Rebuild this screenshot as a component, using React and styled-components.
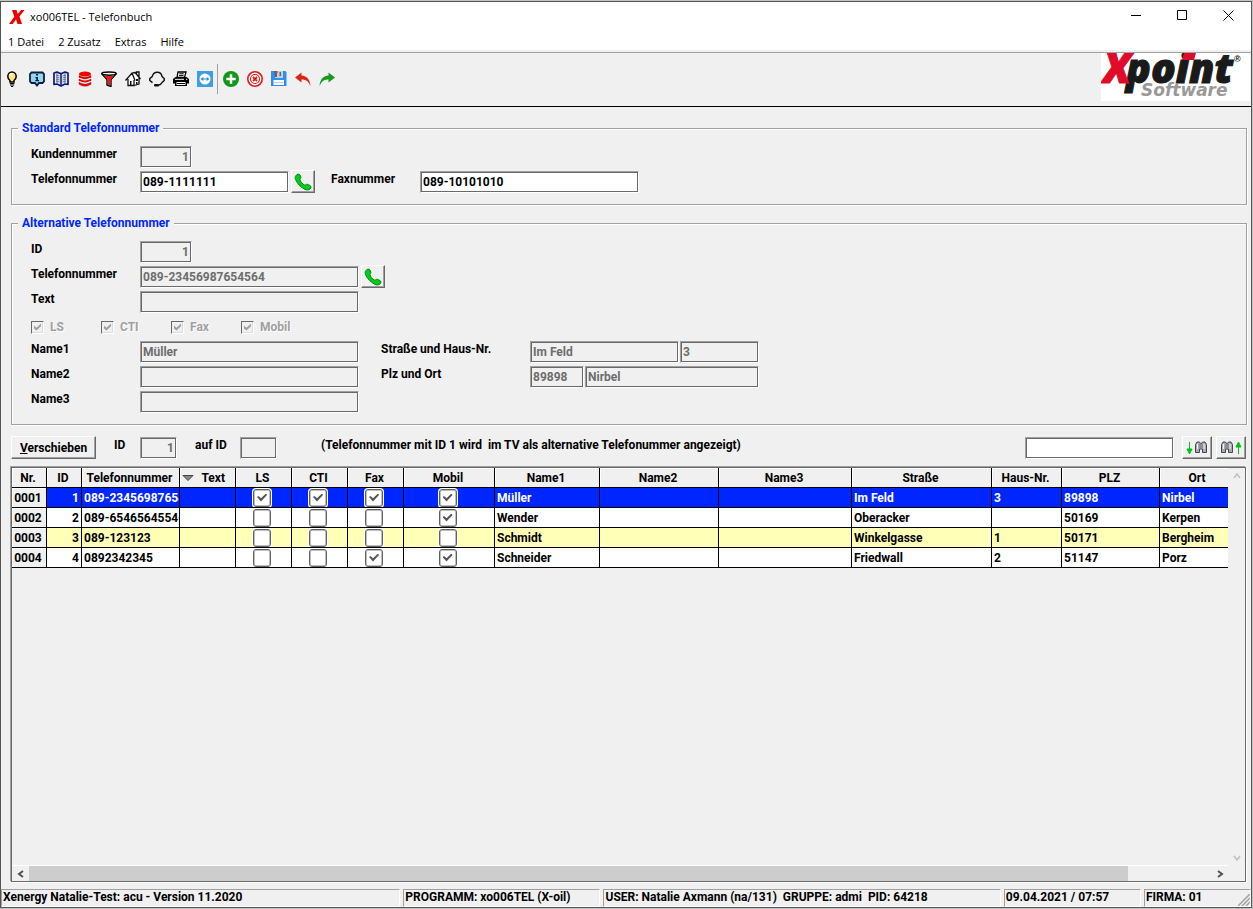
import React from 'react';
import styled, { createGlobalStyle, css } from 'styled-components';

const face = '#f0f0f0';
const shade = '#a0a0a0';
const dark = '#696969';

const GlobalStyle = createGlobalStyle`
  *, *::before, *::after { box-sizing: border-box; }
  body { margin: 0; background: #c4c4c4; }
  button, input { font: inherit; color: inherit; margin: 0; }
  button { padding: 0; }
`;

const Desktop = styled.div`
  min-height: 100vh;
  padding: 1px 1px 1px 0;
  display: flex;
  flex-direction: column;
`;

const Window = styled.div`
  flex: 1;
  display: flex;
  flex-direction: column;
  border: 1px solid #555;
  background: ${face};
  color: #000;
  font: bold 12px/18px Roboto, 'Liberation Sans', sans-serif;
`;

const TitleBar = styled.header`
  height: 29px;
  background: #fff;
  display: flex;
  align-items: center;
  padding-left: 8px;
  gap: 5px;
  font: 11px/16px 'Open Sans', 'Noto Sans', sans-serif;
`;

const Title = styled.h1`
  flex: 1;
  margin: 0;
  font: inherit;
`;

const CaptionButton = styled.button`
  width: 46px;
  height: 28px;
  border: 0;
  background: transparent;
  display: grid;
  place-items: center;
`;

const MenuBar = styled.nav`
  height: 19px;
  background: #fff;
  display: flex;
  align-items: center;
  gap: 14px;
  padding: 2px 0 0 7px;
`;

const MenuItem = styled.button`
  border: 0;
  background: transparent;
  font: 11px/16px 'Open Sans', 'Noto Sans', sans-serif;
`;

const ToolBar = styled.div`
  margin-top: 2px;
  height: 55px;
  border-top: 1px solid ${shade};
  border-bottom: 1px solid #000;
  display: flex;
  align-items: center;
  justify-content: space-between;
`;

const ToolGroup = styled.div`
  display: flex;
  align-items: center;
  padding-bottom: 2px;
`;

const ToolButton = styled.button`
  width: 24px;
  height: 24px;
  border: 0;
  background: transparent;
  display: grid;
  place-items: center;
`;

const Separator = styled.span`
  width: 2px;
  height: 30px;
  border-left: 1px solid ${shade};
`;

const Logo = styled.div`
  background: #fff;
  width: 149px;
  height: 48px;
  margin-right: 1px;
  align-self: flex-start;
  svg { display: block; }
`;

const Content = styled.main`
  flex: 1;
  display: flex;
  flex-direction: column;
  padding: 14px 4px 7px 10px;
`;

const Group = styled.fieldset`
  margin: 0 0 11px;
  min-width: 0;
  border: 1px solid ${shade};
  box-shadow: inset 1px 1px 0 #fff, 1px 1px 0 #fff;
  padding: 10px 6px 9px;
`;

const Legend = styled.legend`
  padding: 0 4px;
  line-height: 14px;
  color: #0026ff;
  background: ${face};
`;

const Row = styled.div`
  height: 25px;
  padding-left: 13px;
  display: flex;
  align-items: flex-start;
`;

const Label = styled.label`
  flex: none;
  width: ${p => p.$w || 109}px;
  margin-left: ${p => p.$gap || 0}px;
`;

const Field = styled.input`
  flex: none;
  width: ${p => p.$w || 219}px;
  height: 22px;
  margin: 1px 1px 0 0;
  padding: 0 2px;
  border: 1px solid;
  border-color: ${shade} #fff #fff ${shade};
  border-radius: 0;
  box-shadow: inset 0 0 0 1px ${dark};
  background: #fff;
  text-align: ${p => (p.$right ? 'right' : 'left')};
  outline: 0;
  &:disabled { background: ${face}; color: #6d6d6d; }
`;

const raised = css`
  border: 1px solid;
  border-color: #fff ${dark} ${dark} #fff;
  box-shadow: inset -1px -1px 0 ${shade};
  background: ${face};
`;

const PushButton = styled.button`
  ${raised}
  flex: none;
  width: ${p => p.$w}px;
  height: 23px;
  display: grid;
  place-items: center;
  ${Field} + & { margin-left: 1px; }
`;

const CheckLabel = styled.label`
  width: 70px;
  height: 24px;
  display: flex;
  align-items: center;
  gap: 6px;
  color: ${shade};
  text-shadow: 1px 1px 0 #fff;
`;

const SunkenCheck = styled.input.attrs({ type: 'checkbox' })`
  appearance: none;
  width: 13px;
  height: 13px;
  border: 1px solid;
  border-color: ${dark} #fff #fff ${dark};
  box-shadow: inset -1px -1px 0 #dcdcdc;
  display: grid;
  place-items: center;
  &:checked::before {
    content: '';
    width: 7px;
    height: 7px;
    background: ${shade};
    clip-path: polygon(0 30%, 35% 60%, 100% 0, 100% 40%, 35% 100%, 0 70%);
  }
`;

const ActionBar = styled.div`
  display: flex;
  align-items: flex-start;
  height: 23px;
  margin-bottom: 8px;
`;

const Note = styled.p`
  flex: 1;
  margin: 0 0 0 43px;
  white-space: pre;
`;

const SearchTools = styled.div`
  display: flex;
  align-items: flex-start;
  gap: 7px;
  padding-right: 1px;
`;

const FindButtons = styled.div`
  display: flex;
  gap: 4px;
`;

const GridPanel = styled.section`
  flex: 1;
  margin-right: 1px;
  display: grid;
  grid-template: minmax(0, 1fr) 16px / minmax(0, 1fr) 17px;
  border: 1px solid ${dark};
  box-shadow: -1px -1px 0 ${shade}, 1px 1px 0 #fff;
`;

const Table = styled.table`
  width: 100%;
  align-self: start;
  table-layout: fixed;
  border-collapse: separate;
  border-spacing: 0;
`;

const HeadCell = styled.th`
  height: 20px;
  padding: 0 2px 0 0;
  line-height: 18px;
  text-align: center;
  background: ${face};
  border-right: 1px solid #000;
  border-bottom: 1px solid #000;
  box-shadow: inset 1px 1px 0 #fff;
  white-space: nowrap;
  &:last-child { border-right: 0; padding-left: 8px; }
`;

const SortHead = styled.span`
  display: flex;
  align-items: center;
  justify-content: space-between;
  padding: 0 8px 0 2px;
`;

const RowHead = styled(HeadCell).attrs({ as: 'th', scope: 'row' })``;

const BodyRow = styled.tr`
  background: ${p => (p.$tone === 'active' ? '#0026ff' : p.$tone === 'alt' ? '#ffffb8' : '#fff')};
  color: ${p => (p.$tone === 'active' ? '#fff' : '#000')};
  ${RowHead} { color: #000; }
`;

const Cell = styled.td`
  height: 20px;
  padding: 0 2px;
  line-height: 18px;
  text-align: ${p => p.$align || 'left'};
  border-right: 1px solid #000;
  border-bottom: 1px solid #000;
  overflow: hidden;
  white-space: nowrap;
  &:last-child { border-right: 0; }
`;

const CheckCell = styled(Cell)`
  padding: 0 3px 0 0;
`;

const GridCheck = styled.input.attrs({ type: 'checkbox' })`
  appearance: none;
  display: block;
  width: 18px;
  height: 18px;
  margin: 0 auto;
  border: 1px solid #606060;
  border-radius: 3px;
  background: #fff;
  box-shadow: 0 0 0 1px #fff, inset 0 0 0 1px #c0c0c0;
  &:checked::before {
    content: '';
    display: block;
    width: 10px;
    height: 8px;
    margin: 4px 3px;
    background: #555;
    clip-path: polygon(0 45%, 15% 30%, 40% 60%, 90% 0, 100% 18%, 40% 100%);
  }
`;

const ScrollTrack = styled.div`
  display: flex;
  flex-direction: ${p => (p.$vertical ? 'column' : 'row')};
  justify-content: space-between;
  ${p => (p.$vertical ? '' : 'border-top: 1px solid #fff;')}
`;

const ScrollButton = styled.button`
  width: 17px;
  height: 15px;
  border: 0;
  background: transparent;
  display: grid;
  place-items: center;
`;

const ThumbLane = styled.div`
  flex: 1;
`;

const Thumb = styled.div`
  width: 93%;
  height: 15px;
  background: #cdcdcd;
`;

const StatusBar = styled.footer`
  display: grid;
  grid-template-columns: 399fr 197fr 397fr 137fr 107fr;
  gap: 3px;
  height: 18px;
`;

const StatusPanel = styled.div`
  border: 1px solid;
  border-color: ${shade} #fff #fff ${shade};
  line-height: 17px;
  padding-left: 1px;
  white-space: pre;
  display: flex;
  justify-content: space-between;
  align-items: flex-end;
  overflow: hidden;
`;

const Svg = ({ size = 16, w, h, children, ...rest }) => (
  <svg width={w || size} height={h || size} viewBox={`0 0 ${w || size} ${h || size}`} fill="none" aria-hidden="true" {...rest}>
    {children}
  </svg>
);

const tools = [
  ['Tipp', <Svg key="i">
    <path d="M5 11V9.500C3.800 8.500 2.800 7.300 2.800 5.400A4.200 4.400 0 0 1 11.200 5.400C11.200 7.300 10.200 8.500 9 9.500V11z" fill="#ffe680" stroke="#000" strokeWidth="1.500" />
    <path d="M5 4.500q.5-2 2.500-2" stroke="#fff" strokeWidth="1.300" />
    <path d="M4.800 12.500h4.600M5 14h4.200M6 15.500h2.200" stroke="#000" strokeWidth="1" />
  </Svg>],
  ['Info', <Svg key="i">
    <path d="M2.500 1.500h11L15 3v7.500L13.500 12H10l-2 2.500L6 12H2.500L1 10.500V3z" fill="#8fd8ee" stroke="#101c40" strokeWidth="1.800" />
    <path d="M7 3h2v1.600H7zM6.500 6H9v3h1v1.200H6.300V9h1V7.200h-.8z" fill="#101c40" />
  </Svg>],
  ['Buch', <Svg key="i">
    <path d="M1 2l3-1 4 1.800L12 1l3 1v11.500l-3-.5-4 2-4-2-3 .500z" fill="#e8ecf8" stroke="#0a1a80" strokeWidth="1.700" strokeLinejoin="round" />
    <path d="M8 3v11" stroke="#0a1a80" strokeWidth="1.500" />
    <path d="M3 4l3.500 1M3 6l3.500 1M3 8l3.500 1M3 10l3.500 1M13 4L9.500 5M13 6L9.500 7M13 8L9.500 9M13 10l-3.500 1M4 2v10M12 2v10" stroke="#6b7280" />
  </Svg>],
  ['Datenbank', <Svg key="i">
    <ellipse cx="8" cy="3" rx="6" ry="2.500" fill="#f00000" />
    <path d="M2 4.500q6 3.500 12 0v2q-6 3.500-12 0zM2 8q6 3.500 12 0v1.800q-6 3.500-12 0zM2 11.300q6 3.500 12 0v2q-6 4-12 0z" fill="#f00000" stroke="#a00000" strokeWidth=".4" />
    <path d="M2.500 7.400q5.500 3 11 0M2.500 10.700q5.500 3 11 0" stroke="#fff" strokeWidth=".7" />
  </Svg>],
  ['Filter', <Svg key="i">
    <path d="M1 3l5 5.500v5.500l4 1.500V8.500L15 3z" fill="#fff" stroke="#000" strokeWidth="1.400" strokeLinejoin="round" />
    <path d="M3 5h10L9.500 8.500v6.200L6.800 13.500V8.500z" fill="#f01818" />
    <ellipse cx="8" cy="2.600" rx="7.200" ry="1.600" fill="#fff" stroke="#000" strokeWidth="1.500" />
  </Svg>],
  ['Start', <Svg key="i">
    <path d="M3 8v6.500h7L14 13V7l-3-5H8z" fill="#fff" />
    <path d="M.5 9.500L7 2l3-.5 5.500 6.500M3 8v6.500h6V9M9 14.500l5-1.500V7M10 9.500L7 2M11.500 3V1H14v5" stroke="#111" strokeWidth="1.300" />
    <path d="M5 14.500V10h1.500v4.500zM11 8h2v2h-2zM11 11h1.500v2.500H11z" fill="#111" />
  </Svg>],
  ['Headset', <Svg key="i">
    <path d="M3.300 5.500C4 2.300 6 1.200 8.200 1.200S12.600 2.300 13 5.500M13 11.500q-1 2.300-3.500 2.700" stroke="#111" strokeWidth="1.400" />
    <path d="M3.500 5.300L.8 7.500v2l2.700 2.200M12.700 5.300L15.200 7.500v2l-2.500 2.200" stroke="#111" strokeWidth="1.500" />
    <rect x="5" y="13" width="5" height="2.500" rx="1" fill="#111" />
  </Svg>],
  ['Drucken', <Svg key="i">
    <path d="M4 6.500L5 1h8l-1.500 5.500z" fill="#fff" stroke="#000" strokeWidth="1.300" />
    <path d="M6.300 2.800h4.500M6 4.600h4.500" stroke="#000" />
    <path d="M2.500 6h11L16 8v4.500h-2V15H2v-2.500H0V8z" fill="#000" />
    <path d="M2 8.300h9M13 8.300h1.300" stroke="#fff" />
    <path d="M3.500 11h9v3h-9z" fill="#fff" /><path d="M4 12.500h8" stroke="#000" />
  </Svg>],
  ['Fernwartung', <Svg key="i">
    <rect width="16" height="16" fill="#3b9fe3" />
    <circle cx="8" cy="8" r="5.500" fill="#fff" />
    <path d="M3.500 8L6.300 6v1.400h3.400V6l2.800 2-2.800 2V8.600H6.300V10z" fill="#2b8fd3" />
  </Svg>],
];

const editTools = [
  ['Neu', <Svg key="i">
    <circle cx="8" cy="8" r="8" fill="#109618" /><path d="M8 3.300v9.400M3.300 8h9.400" stroke="#fff" strokeWidth="2.500" />
  </Svg>],
  ['Löschen', <Svg key="i">
    <circle cx="8" cy="8" r="7.200" fill="#fff" stroke="#e01818" strokeWidth="1.600" />
    <circle cx="8" cy="8" r="4.500" stroke="#e01818" strokeWidth="1.100" />
    <path d="M6 6l4 4M10 6l-4 4" stroke="#e01818" strokeWidth="1.800" />
  </Svg>],
  ['Speichern', <Svg key="i">
    <path d="M0 0h14.500L15.500 1.500V15H0z" fill="#2f8ff0" />
    <path d="M4 0h8v7H4z" fill="#c9cdd4" /><path d="M3 0h3v6H4zM8.500 1H10v4H8.500z" fill="#5b6270" /><path d="M5 0h1.500v2H5z" fill="#d04030" />
    <path d="M2.500 9h10.500v5H2.500z" fill="#fff" /><path d="M3 11.500h9.500" stroke="#b8cde8" />
  </Svg>],
  ['Rückgängig', <Svg key="i">
    <path d="M6.500 1.500L0 6.500l6.500 5V8.500c4-.5 7 1.500 9 6.500C15 8.500 12 5 6.500 4.500z" fill="#de2418" />
  </Svg>],
  ['Wiederholen', <Svg key="i">
    <path d="M9.500 1.500L16 6.500l-6.500 5V8.500c-4-.5-7 1.500-9 6.500C1 8.500 4 5 9.500 4.500z" fill="#18981c" />
  </Svg>],
];

const PhoneIcon = () => (
  <Svg size={18}>
    <path d="M2 2.500C3 1 5 .500 6 2l1 2.300c.2 1-1.200 1.500-1 2.500.6 2 2.500 4.200 4.400 5.200 1 .4 1.700-1 2.700-.8L16 12.500c1.300.7 1.300 2.200 0 3.500-1.200 1.200-3.500 1.200-5 .4C6.500 14.200 3.200 10.500 1.500 6.500 1 5 1 3.600 2 2.500z" fill="#00cc1a" stroke="#078a12" />
  </Svg>
);

const FindIcon = ({ up }) => (
  <Svg w={22} h={16}>
    <path d={up ? 'M18.500 14V4M16 7l2.500-5 2.500 5z' : 'M3.500 2v10M1 9l2.500 5L6 9z'} stroke="#00c21a" fill="#00c21a" />
    <g transform={up ? 'translate(1 0)' : 'translate(9 0)'}>
      <path d="M.5 4.500L2 2h2.500l1 1.500h1L7.500 2H10l1.500 2.500v8h-4V9h-3v3.500h-4z" fill="#a9abb2" stroke="#44464c" />
      <path d="M5 4v4M7 4v4" stroke="#6d7076" />
      <path d="M2.500 4v5M9 4v5" stroke="#f4f4f8" />
    </g>
  </Svg>
);

const XpointLogo = () => (
  <svg width="149" height="48" viewBox="0 0 149 48" role="img" aria-label="Xpoint Software">
    <text x="25" y="30" fontFamily="Open Sans" fontWeight="800" fontStyle="italic" fontSize="41" fill="#1a1a1a" stroke="#1a1a1a">point</text>
    <path d="M83 0h12l-2 7H81z" fill="#e00a2a" />
    <text x="2" y="30" fontFamily="Open Sans" fontWeight="800" fontStyle="italic" fontSize="42" fill="#e00a2a" stroke="#e00a2a">X</text>
    <text x="40" y="43" fontFamily="DejaVu Sans" fontWeight="bold" fontStyle="italic" fontSize="17" fill="#999">Software</text>
    <text x="133" y="9" fontFamily="Liberation Sans" fontSize="9" fill="#222">®</text>
  </svg>
);

const chevrons = {
  left: 'M6 1L2 4l4 3',
  right: 'M2 1l4 3-4 3',
  up: 'M1 6l3-4 3 4',
  down: 'M1 2l3 4 3-4',
};

const Arrow = ({ dir, faint }) => (
  <ScrollButton aria-label={dir}>
    <Svg size={8}><path d={chevrons[dir]} stroke={faint ? '#bfbfbf' : '#505050'} strokeWidth={faint ? 1.5 : 2} /></Svg>
  </ScrollButton>
);

const columns = [
  ['Nr.', 35], ['ID', 35], ['Telefonnummer', 98], ['Text', 56], ['LS', 56], ['CTI', 56], ['Fax', 56],
  ['Mobil', 91], ['Name1', 105], ['Name2', 119], ['Name3', 133], ['Straße', 140], ['Haus-Nr.', 70], ['PLZ', 98], ['Ort', null],
];

const entries = [
  { nr: '0001', id: 1, tel: '089-23456987654564', flags: [1, 1, 1, 1], name: 'Müller', street: 'Im Feld', no: '3', zip: '89898', town: 'Nirbel', tone: 'active' },
  { nr: '0002', id: 2, tel: '089-65465645546', flags: [0, 0, 0, 1], name: 'Wender', street: 'Oberacker', no: '', zip: '50169', town: 'Kerpen' },
  { nr: '0003', id: 3, tel: '089-123123', flags: [0, 0, 0, 0], name: 'Schmidt', street: 'Winkelgasse', no: '1', zip: '50171', town: 'Bergheim', tone: 'alt' },
  { nr: '0004', id: 4, tel: '0892342345', flags: [0, 0, 1, 1], name: 'Schneider', street: 'Friedwall', no: '2', zip: '51147', town: 'Porz' },
];

const flagNames = ['LS', 'CTI', 'Fax', 'Mobil'];

const PhoneBookTable = () => (
  <Table>
    <colgroup>
      {columns.map(([name, width]) => <col key={name} width={width || undefined} />)}
    </colgroup>
    <thead>
      <tr>
        {columns.map(([name]) => (
          <HeadCell key={name} scope="col">
            {name === 'Text' ? (
              <SortHead>
                <Svg w={12} h={8}><path d="M1 1.500h10L6 6.500z" fill="#888" stroke="#444" /></Svg>
                {name}
              </SortHead>
            ) : name}
          </HeadCell>
        ))}
      </tr>
    </thead>
    <tbody>
      {entries.map(e => (
        <BodyRow key={e.nr} $tone={e.tone}>
          <RowHead>{e.nr}</RowHead>
          <Cell $align="right">{e.id}</Cell>
          <Cell>{e.tel}</Cell>
          <Cell />
          {e.flags.map((on, i) => (
            <CheckCell key={flagNames[i]}>
              <GridCheck defaultChecked={!!on} aria-label={`${flagNames[i]} ${e.nr}`} />
            </CheckCell>
          ))}
          <Cell>{e.name}</Cell>
          <Cell />
          <Cell />
          <Cell>{e.street}</Cell>
          <Cell>{e.no}</Cell>
          <Cell>{e.zip}</Cell>
          <Cell>{e.town}</Cell>
        </BodyRow>
      ))}
    </tbody>
  </Table>
);

export default function App() {
  return (
    <Desktop>
      <GlobalStyle />
      <Window>
        <TitleBar>
          <Svg>
            <path d="M3 1h4.500l1.300 4L12 1h3.500l-5 6.500L13 15H8.500L7 10.500 3.700 15H0l5.300-7.300z" fill="#f00000" />
          </Svg>
          <Title>xo006TEL - Telefonbuch</Title>
          <ToolGroup>
            <CaptionButton aria-label="Minimieren"><Svg size={11}><path d="M0 5.500h10" stroke="#000" /></Svg></CaptionButton>
            <CaptionButton aria-label="Maximieren"><Svg size={11}><path d="M.5 .5h9v9h-9z" stroke="#000" /></Svg></CaptionButton>
            <CaptionButton aria-label="Schließen"><Svg size={11}><path d="M.5 .5l10 10M10.500 .5l-10 10" stroke="#000" /></Svg></CaptionButton>
          </ToolGroup>
        </TitleBar>
        <MenuBar>
          {['1 Datei', '2 Zusatz', 'Extras', 'Hilfe'].map(m => <MenuItem key={m}>{m}</MenuItem>)}
        </MenuBar>
        <ToolBar>
          <ToolGroup>
            {tools.map(([name, icon]) => <ToolButton key={name} aria-label={name}>{icon}</ToolButton>)}
            <Separator />
            {editTools.map(([name, icon]) => <ToolButton key={name} aria-label={name}>{icon}</ToolButton>)}
          </ToolGroup>
          <Logo><XpointLogo /></Logo>
        </ToolBar>

        <Content>
          <Group>
            <Legend>Standard Telefonnummer</Legend>
            <Row>
              <Label htmlFor="kdnr">Kundennummer</Label>
              <Field id="kdnr" $w={52} $right disabled defaultValue="1" />
            </Row>
            <Row>
              <Label htmlFor="tel">Telefonnummer</Label>
              <Field id="tel" $w={149} defaultValue="089-1111111" />
              <PushButton $w={24} aria-label="Anrufen"><PhoneIcon /></PushButton>
              <Label htmlFor="fax" $w={89} $gap={16}>Faxnummer</Label>
              <Field id="fax" defaultValue="089-10101010" />
            </Row>
          </Group>

          <Group>
            <Legend>Alternative Telefonnummer</Legend>
            <Row>
              <Label htmlFor="altid">ID</Label>
              <Field id="altid" $w={52} $right disabled defaultValue="1" />
            </Row>
            <Row>
              <Label htmlFor="alttel">Telefonnummer</Label>
              <Field id="alttel" disabled defaultValue="089-23456987654564" />
              <PushButton $w={24} aria-label="Anrufen"><PhoneIcon /></PushButton>
            </Row>
            <Row>
              <Label htmlFor="text">Text</Label>
              <Field id="text" disabled />
            </Row>
            <Row>
              {flagNames.map(f => (
                <CheckLabel key={f}><SunkenCheck disabled defaultChecked />{f}</CheckLabel>
              ))}
            </Row>
            <Row>
              <Label htmlFor="name1">Name1</Label>
              <Field id="name1" disabled defaultValue="Müller" />
              <Label htmlFor="street" $w={149} $gap={21}>Straße und Haus-Nr.</Label>
              <Field id="street" $w={149} disabled defaultValue="Im Feld" />
              <Field aria-label="Haus-Nr." $w={79} disabled defaultValue="3" />
            </Row>
            <Row>
              <Label htmlFor="name2">Name2</Label>
              <Field id="name2" disabled />
              <Label htmlFor="zip" $w={149} $gap={21}>Plz und Ort</Label>
              <Field id="zip" $w={54} disabled defaultValue="89898" />
              <Field aria-label="Ort" $w={174} disabled defaultValue="Nirbel" />
            </Row>
            <Row>
              <Label htmlFor="name3">Name3</Label>
              <Field id="name3" disabled />
            </Row>
          </Group>

          <ActionBar>
            <PushButton $w={85}><span><u>V</u>erschieben</span></PushButton>
            <Label htmlFor="from" $w={26} $gap={18}>ID</Label>
            <Field id="from" $w={37} $right disabled defaultValue="1" />
            <Label htmlFor="to" $w={45} $gap={17}>auf ID</Label>
            <Field id="to" $w={37} disabled />
            <Note>(Telefonnummer mit ID 1 wird  im TV als alternative Telefonummer angezeigt)</Note>
            <SearchTools>
              <Field aria-label="Suche" $w={149} />
              <FindButtons>
                <PushButton $w={30} aria-label="Abwärts suchen"><FindIcon /></PushButton>
                <PushButton $w={30} aria-label="Aufwärts suchen"><FindIcon up /></PushButton>
              </FindButtons>
            </SearchTools>
          </ActionBar>

          <GridPanel>
            <PhoneBookTable />
            <ScrollTrack $vertical>
              <Arrow dir="up" faint />
              <Arrow dir="down" faint />
            </ScrollTrack>
            <ScrollTrack>
              <Arrow dir="left" />
              <ThumbLane><Thumb /></ThumbLane>
              <Arrow dir="right" />
            </ScrollTrack>
          </GridPanel>
        </Content>

        <StatusBar>
          <StatusPanel>Xenergy Natalie-Test: acu - Version 11.2020</StatusPanel>
          <StatusPanel>PROGRAMM: xo006TEL (X-oil)</StatusPanel>
          <StatusPanel>USER: Natalie Axmann (na/131)  GRUPPE: admi  PID: 64218</StatusPanel>
          <StatusPanel>09.04.2021 / 07:57</StatusPanel>
          <StatusPanel>
            FIRMA: 01
            <Svg size={12}><path d="M0 12L12 0M4 12l8-8M8 12l4-4" stroke={shade} strokeWidth="1.500" /></Svg>
          </StatusPanel>
        </StatusBar>
      </Window>
    </Desktop>
  );
}
